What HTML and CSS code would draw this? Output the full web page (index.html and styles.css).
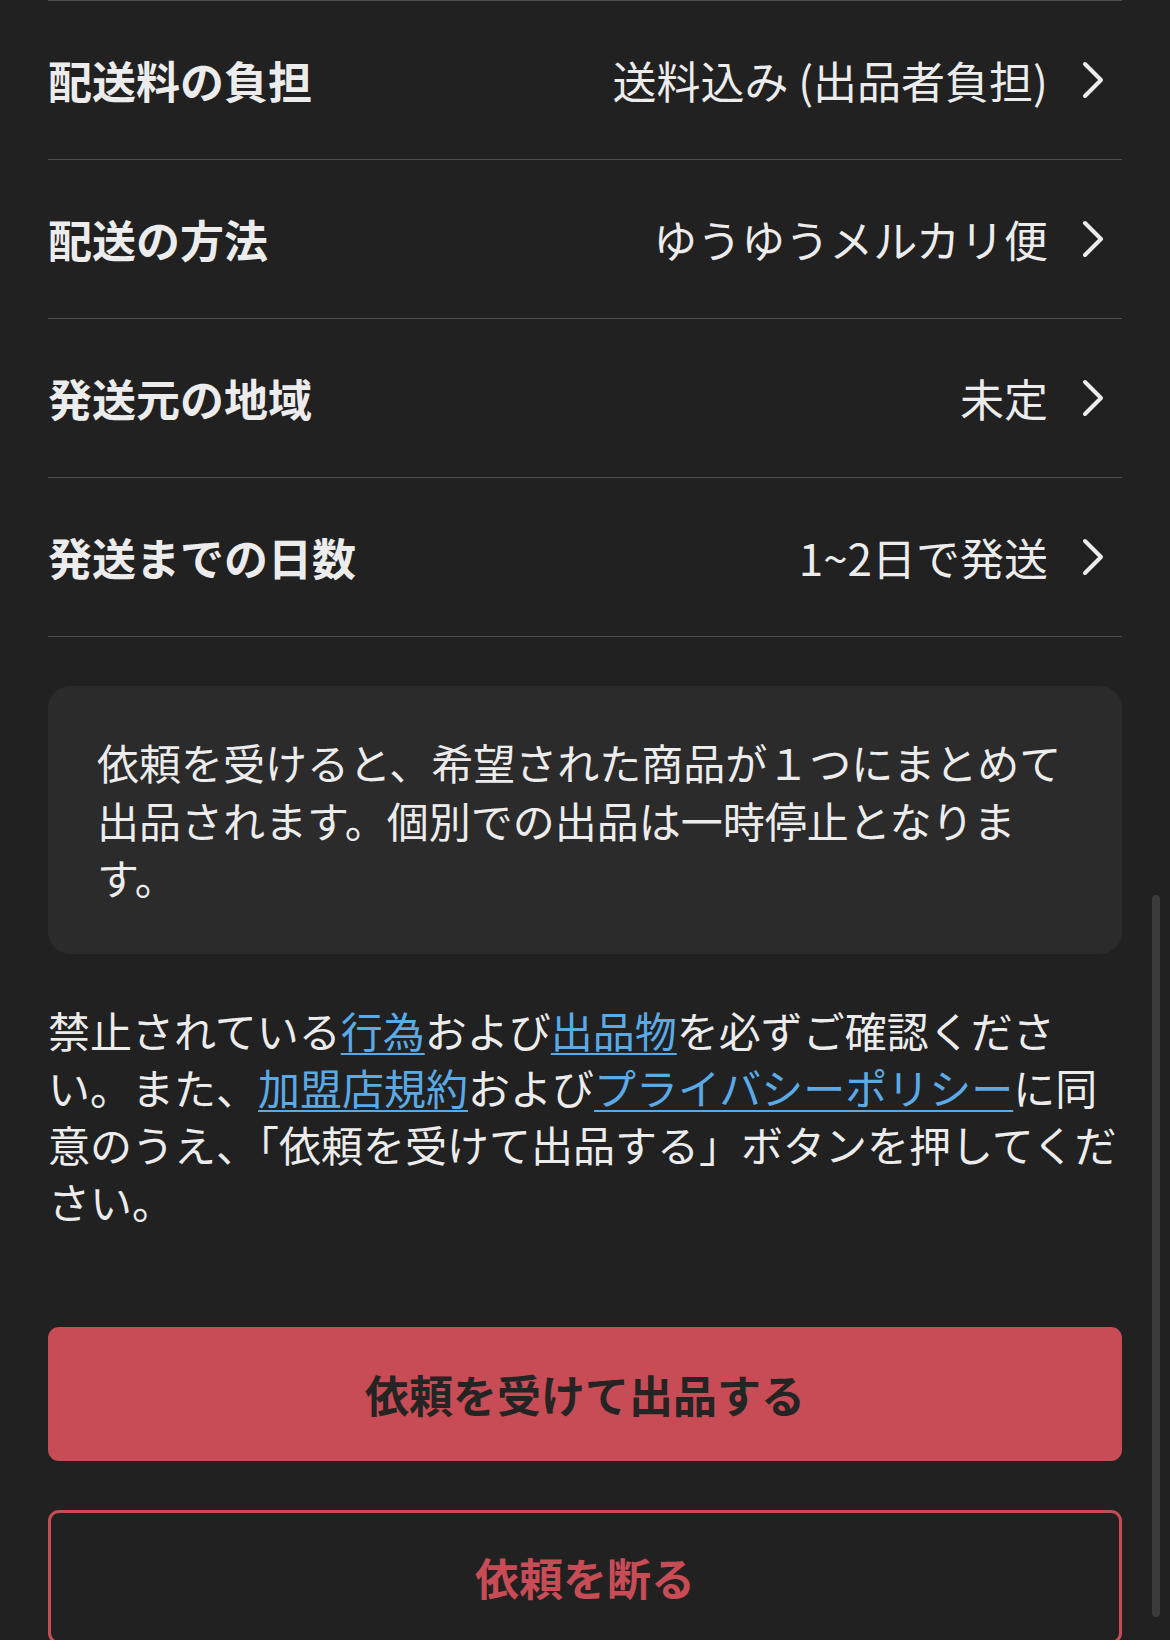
FILE: index.html
```html
<!DOCTYPE html>
<html lang="ja">
<head>
    <meta charset="UTF-8">
    <meta name="viewport" content="width=device-width, initial-scale=1.0">
    <title>依頼を受けて出品</title>
    <link rel="stylesheet" href="styles.css">
</head>
<body>
    <div class="page">
        <ul class="settings">
            <li class="row">
                <span class="label">配送料の負担</span>
                <span class="value">送料込み (出品者負担)</span>
                <svg class="chevron" viewBox="0 0 22 40"><path d="M3 4 L19 20 L3 36"/></svg>
            </li>
            <li class="row">
                <span class="label">配送の方法</span>
                <span class="value">ゆうゆうメルカリ便</span>
                <svg class="chevron" viewBox="0 0 22 40"><path d="M3 4 L19 20 L3 36"/></svg>
            </li>
            <li class="row">
                <span class="label">発送元の地域</span>
                <span class="value">未定</span>
                <svg class="chevron" viewBox="0 0 22 40"><path d="M3 4 L19 20 L3 36"/></svg>
            </li>
            <li class="row">
                <span class="label">発送までの日数</span>
                <span class="value">1~2日で発送</span>
                <svg class="chevron" viewBox="0 0 22 40"><path d="M3 4 L19 20 L3 36"/></svg>
            </li>
        </ul>

        <div class="notice">
            依頼を受けると、希望された商品が１つにまとめて出品されます。個別での出品は一時停止となります。
        </div>

        <p class="terms">
            禁止されている<a href="#">行為</a>および<a href="#">出品物</a>を必ずご確認ください。また、<a href="#">加盟店規約</a>および<a href="#">プライバシーポリシー</a>に同意のうえ、「依頼を受けて出品する」ボタンを押してください。
        </p>

        <div class="actions">
            <button class="btn btn-primary">依頼を受けて出品する</button>
            <button class="btn btn-outline">依頼を断る</button>
        </div>
    </div>

    <div class="scrollbar"></div>
</body>
</html>
```

FILE: styles.css
```css
body {
    margin: 0;
    background-color: #212121;
    color: #ececec;
    font-family: "Noto Sans CJK JP", "Noto Sans", sans-serif;
    overflow: hidden;
}

.page {
    padding: 0 48px;
}

.settings {
    list-style: none;
    margin: 0;
    padding: 0;
}

.row {
    display: flex;
    align-items: center;
    height: 159px;
    box-sizing: border-box;
    border-top: 1.5px solid #4e4e4e;
    font-size: 44px;
}

.row:last-child {
    height: 160px;
    border-bottom: 1.5px solid #4e4e4e;
}

.label {
    font-weight: bold;
    flex: 1;
}

.value {
    font-weight: normal;
}

.chevron {
    width: 22px;
    height: 40px;
    margin-left: 34px;
    margin-right: 18px;
    fill: none;
    stroke: #ececec;
    stroke-width: 4;
    stroke-linecap: round;
    stroke-linejoin: round;
}

.notice {
    margin-top: 49px;
    padding: 47px 49px 48px;
    background-color: #2b2b2b;
    border-radius: 22px;
    font-size: 42px;
    line-height: 57.5px;
}

.terms {
    margin: 47px 0 0;
    font-size: 42px;
    line-height: 57.3px;
}

.terms a {
    color: #5aaae8;
    text-decoration: underline;
    text-decoration-thickness: 2px;
    text-underline-offset: 5px;
}

.actions {
    margin-top: 97px;
    display: flex;
    flex-direction: column;
    gap: 49px;
}

.btn {
    height: 134px;
    border-radius: 11px;
    font-family: inherit;
    font-size: 44px;
    font-weight: bold;
    cursor: pointer;
}

.btn-primary {
    background-color: #c84c55;
    color: #242424;
    border: none;
}

.btn-outline {
    background-color: transparent;
    color: #c84c55;
    border: 3px solid #c84c55;
}

.scrollbar {
    position: fixed;
    top: 895px;
    left: 1152px;
    width: 8px;
    height: 722px;
    border-radius: 4px;
    background-color: #3b3b3b;
}
```
